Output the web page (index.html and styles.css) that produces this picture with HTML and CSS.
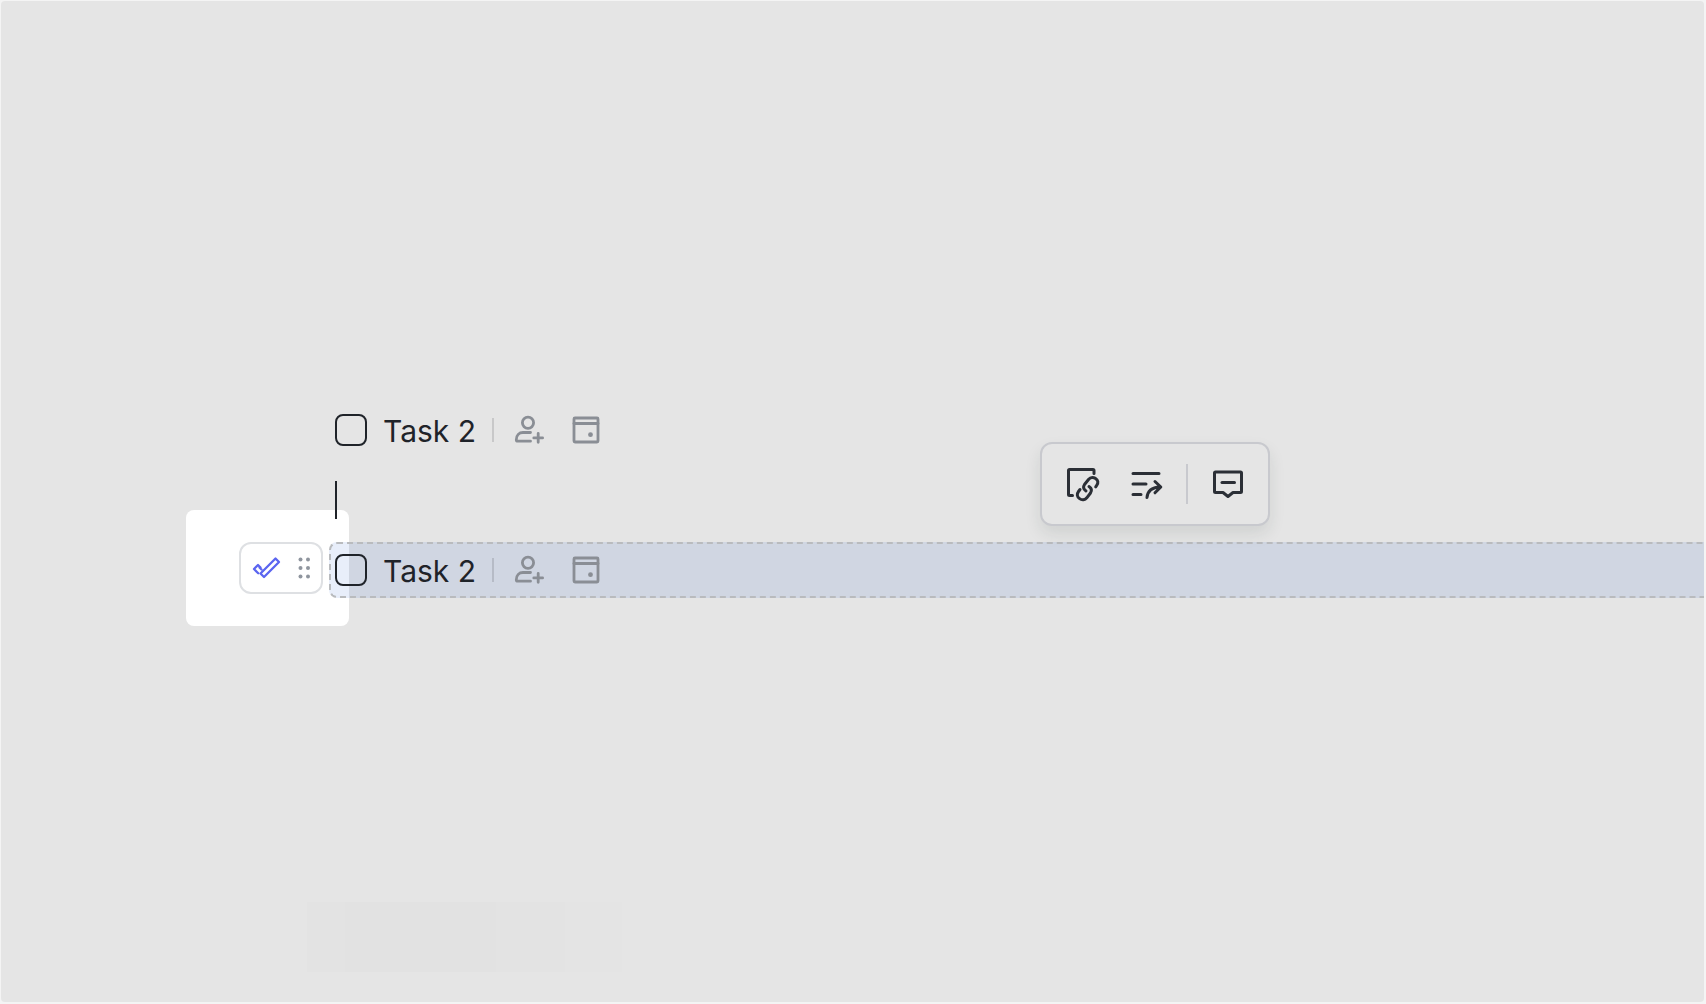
FILE: index.html
```html
<!DOCTYPE html>
<html lang="en">
<head>
<meta charset="UTF-8" />
<meta name="viewport" content="width=device-width, initial-scale=1" />
<title>Tasks</title>
<link rel="stylesheet" href="styles.css">
</head>
<body>
<svg class="sprite" aria-hidden="true">
  <symbol id="icon-assign" viewBox="0 0 32 32">
    <circle cx="14" cy="8.8" r="5.6" />
    <path d="M16.500 27.200H3.800C2.800 27.200 2.300 26.600 2.300 25.700C2.300 21.200 5.200 18.500 9 18.500H16.500" />
    <path d="M24.200 19.500V28.300M19.800 23.900H28.600" />
  </symbol>
  <symbol id="icon-date" viewBox="0 0 32 32">
    <rect x="4" y="4" width="24" height="24" rx="1" />
    <path d="M4 9.500H28" />
    <circle class="dot" cx="20.500" cy="20.700" r="2.400" />
  </symbol>
</svg>

<main class="page">
  <div class="task">
    <input type="checkbox" id="task1" class="check" />
    <label for="task1">Task 2</label>
    <span class="divider"></span>
    <button class="meta" aria-label="Add assignee"><svg><use href="#icon-assign" /></svg></button>
    <button class="meta" aria-label="Set date"><svg><use href="#icon-date" /></svg></button>
  </div>

  <div class="caret"></div>

  <div class="block">
    <div class="gutter">
      <button class="handle" aria-label="Drag task">
        <svg class="tick" viewBox="0 0 30 24">
          <path d="M8.500 11.500L6 9L2 13L6.200 17.200M9.500 13.500L7.500 11.500" />
          <path d="M8.500 17.500L23.500 2.500L27 6L12 21Z" />
        </svg>
        <svg class="grip" viewBox="0 0 12 24">
          <circle cx="2.500" cy="3.500" r="2" /><circle cx="10" cy="3.500" r="2" />
          <circle cx="2.500" cy="12" r="2" /><circle cx="10" cy="12" r="2" />
          <circle cx="2.500" cy="20.500" r="2" /><circle cx="10" cy="20.500" r="2" />
        </svg>
      </button>
    </div>
    <div class="task selected">
      <input type="checkbox" id="task2" class="check" />
      <label for="task2">Task 2</label>
      <span class="divider"></span>
      <button class="meta" aria-label="Add assignee"><svg><use href="#icon-assign" /></svg></button>
      <button class="meta" aria-label="Set date"><svg><use href="#icon-date" /></svg></button>
    </div>
    <div class="toolbar">
      <button aria-label="Copy link">
        <svg viewBox="0 0 36 36">
          <path d="M8.500 29.500H5.500Q4.500 29.500 4.500 28.500V4.500Q4.500 3.500 5.500 3.500H29Q30 3.500 30 4.500V7.500" />
          <path d="M31.700 20.800L32.700 19.400C34.700 16.700 34 14 31.500 12.400C29 11 26.200 11.400 24.500 13.500L20.500 18.500C19 20.800 19.500 23.300 22 25" />
          <path d="M16 23.500L14.500 25.500C12.600 28 13 31 15.500 32.600C18 34.400 21 34 22.800 31.800L26.500 27C28 24.600 27.500 22.200 25 20.500" />
        </svg>
      </button>
      <button aria-label="Move to">
        <svg viewBox="0 0 36 36">
          <path d="M5 7.500H31M5 18H18M5 28.500H13" />
          <path d="M19 31.500C19.500 25 23.500 21.500 32 21M27 15.500L32.800 21L27 26.800" />
        </svg>
      </button>
      <span class="bar"></span>
      <button aria-label="Comment">
        <svg viewBox="0 0 36 36">
          <path d="M5.500 6H30.500Q31.500 6 31.500 7V25.500Q31.500 26.500 30.500 26.500H23L18 30.500L13 26.500H5.500Q4.500 26.500 4.500 25.500V7Q4.500 6 5.500 6Z" />
          <path d="M12 16.500H24.500" />
        </svg>
      </button>
    </div>
  </div>

  <div class="ghost"></div>
</main>
</body>
</html>
```
FILE: styles.css
```css
* {
  margin: 0;
  padding: 0;
  box-sizing: border-box;
}

body {
  font-family: Inter, "Liberation Sans", sans-serif;
  background: #f4f4f4;
  color: #1f2329;
  display: flex;
  min-height: 100vh;
  padding: 1px 2px 2px 1px;
}

button {
  background: none;
  border: none;
  cursor: pointer;
}

svg {
  display: block;
  fill: none;
  stroke: currentColor;
  stroke-width: 2.8;
  stroke-linecap: round;
  stroke-linejoin: round;
}

.sprite {
  position: absolute;
  width: 0;
  height: 0;
}

.page {
  flex: 1;
  min-width: 0;
  padding: 401px 0 30px 328px;
  background: #e5e5e5;
  border-radius: 4px;
}

.task {
  display: flex;
  align-items: center;
  height: 56px;
  padding-left: 6px;
}

.check {
  appearance: none;
  width: 32px;
  height: 32px;
  border: 2px solid #1f2329;
  border-radius: 8px;
}

.task label {
  margin: 0 16px;
  padding-top: 2px;
  font-size: 30px;
  line-height: 40px;
}

.divider {
  width: 2px;
  height: 24px;
  margin-right: 20px;
  background: rgba(31, 35, 41, 0.15);
}

.meta {
  margin-right: 24px;
  color: #8a8e95;
}

.meta svg {
  width: 32px;
  height: 32px;
}

.dot {
  fill: currentColor;
  stroke: none;
}

.caret {
  position: relative;
  z-index: 2;
  width: 2px;
  height: 38px;
  margin: 23px 0 23px 6px;
  background: #1f2329;
}

.block {
  position: relative;
}

.selected {
  position: relative;
  padding-left: 4px;
  background: rgba(46, 100, 210, 0.11);
  border: 2px dashed #b9bbbe;
  border-right: none;
  border-radius: 8px 0 0 8px;
}

.gutter {
  position: absolute;
  top: -32px;
  left: -143px;
  width: 163px;
  height: 116px;
  padding: 32px 0 0 53px;
  background: #fff;
  border-radius: 8px;
}

.handle {
  display: flex;
  align-items: center;
  gap: 16px;
  width: 84px;
  height: 52px;
  padding-left: 11px;
  border: 2px solid #dee0e3;
  border-radius: 12px;
}

.tick {
  width: 30px;
  height: 24px;
  color: #5b65f0;
  stroke-width: 2.3;
}

.grip {
  width: 12px;
  height: 24px;
  fill: #8f959e;
  stroke: none;
}

.toolbar {
  position: absolute;
  top: -100px;
  right: 434px;
  display: flex;
  align-items: center;
  height: 84px;
  padding: 0 22px;
  background: #e5e5e5;
  border: 2px solid #c8c9ce;
  border-radius: 12px;
  box-shadow: 0 8px 16px rgba(31, 45, 41, 0.1);
}

.toolbar button {
  color: #2b2f36;
}

.toolbar button + button {
  margin-left: 28px;
}

.toolbar svg {
  width: 36px;
  height: 36px;
  stroke-width: 3;
}

.bar {
  width: 2px;
  height: 40px;
  margin: 0 22px;
  background: #c8c9ce;
}

.ghost {
  width: 315px;
  height: 70px;
  margin: 304px 0 0 -22px;
  background: linear-gradient(90deg, #e3e3e3 12%, #e2e2e2 12%, #e2e2e2 60%, #e3e3e3 60%, #e3e3e3 82%, #e4e4e4 82%);
}
```
